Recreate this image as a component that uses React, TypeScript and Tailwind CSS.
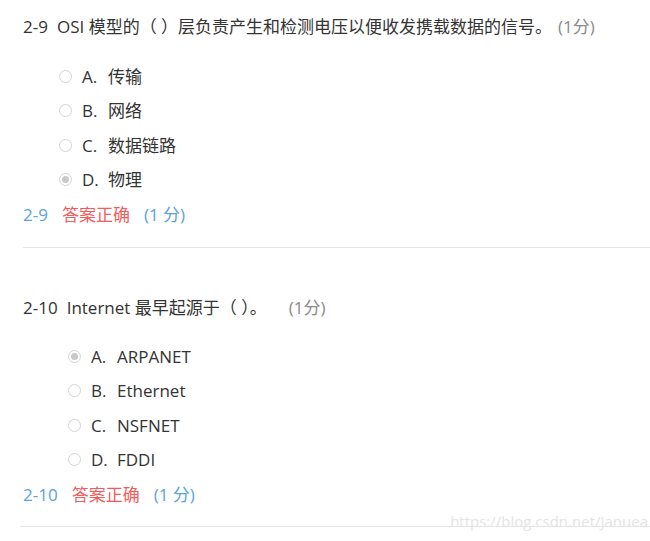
type Option = { key: string; text: string; checked?: boolean };

const q1: Option[] = [
  { key: "A.", text: "传输" },
  { key: "B.", text: "网络" },
  { key: "C.", text: "数据链路" },
  { key: "D.", text: "物理", checked: true },
];

const q2: Option[] = [
  { key: "A.", text: "ARPANET", checked: true },
  { key: "B.", text: "Ethernet" },
  { key: "C.", text: "NSFNET" },
  { key: "D.", text: "FDDI" },
];

function Radio({ checked }: { checked?: boolean }) {
  return (
    <span className="flex h-[13px] w-[13px] shrink-0 items-center justify-center rounded-full border border-[#d4d4d4] bg-white">
      {checked && <span className="h-[7px] w-[7px] rounded-full bg-[#c9c9c9]" />}
    </span>
  );
}

function Options({ items, indent }: { items: Option[]; indent: string }) {
  return (
    <div className={`flex flex-col ${indent}`}>
      {items.map((o) => (
        <div key={o.key} className="flex h-[34.5px] items-center">
          <Radio checked={o.checked} />
          <span className="ml-[10px] w-[26px]">{o.key}</span>
          <span>{o.text}</span>
        </div>
      ))}
    </div>
  );
}

function Result({ no }: { no: string }) {
  return (
    <div className="mt-[6px] flex h-6 items-center">
      <span className="text-[#5ba3d9]">{no}</span>
      <span className="ml-[14px] text-[#f25c5c]">答案正确</span>
      <span className="ml-[14px] text-[#5ba3d9]">(1 分)</span>
    </div>
  );
}

export default function App() {
  return (
    <div
      className="relative h-[541px] w-[650px] overflow-hidden bg-white text-[17px] text-[#333333]"
      style={{ fontFamily: '"Open Sans", "Noto Sans CJK SC", sans-serif' }}
    >
      <section className="pl-[23px] pt-[15px]">
        <div className="flex h-6 items-center whitespace-nowrap">
          <span>2-9</span>
          <span className="ml-[9px]">OSI 模型的（ ）层负责产生和检测电压以便收发携载数据的信号。</span>
          <span className="ml-[6px] text-[#8a8a8a]">(1分)</span>
        </div>
        <div className="mt-[20px]">
          <Options items={q1} indent="pl-[36px]" />
        </div>
        <Result no="2-9" />
      </section>

      <div className="mt-[20px] ml-[23px] h-px bg-[#e6e6e6]" />

      <section className="pl-[23px] pt-[48px]">
        <div className="flex h-6 items-center whitespace-nowrap">
          <span>2-10</span>
          <span className="ml-[9px]">Internet 最早起源于（ ）。</span>
          <span className="ml-[22px] text-[#8a8a8a]">(1分)</span>
        </div>
        <div className="mt-[19px]">
          <Options items={q2} indent="pl-[45px]" />
        </div>
        <Result no="2-10" />
      </section>

      <div className="mt-[19px] ml-[20px] h-px bg-[#e6e6e6]" />

      <span className="absolute bottom-[9px] right-[2px] text-[15px] text-[#e4e4e4]">
        https://blog.csdn.net/Januea
      </span>
    </div>
  );
}
